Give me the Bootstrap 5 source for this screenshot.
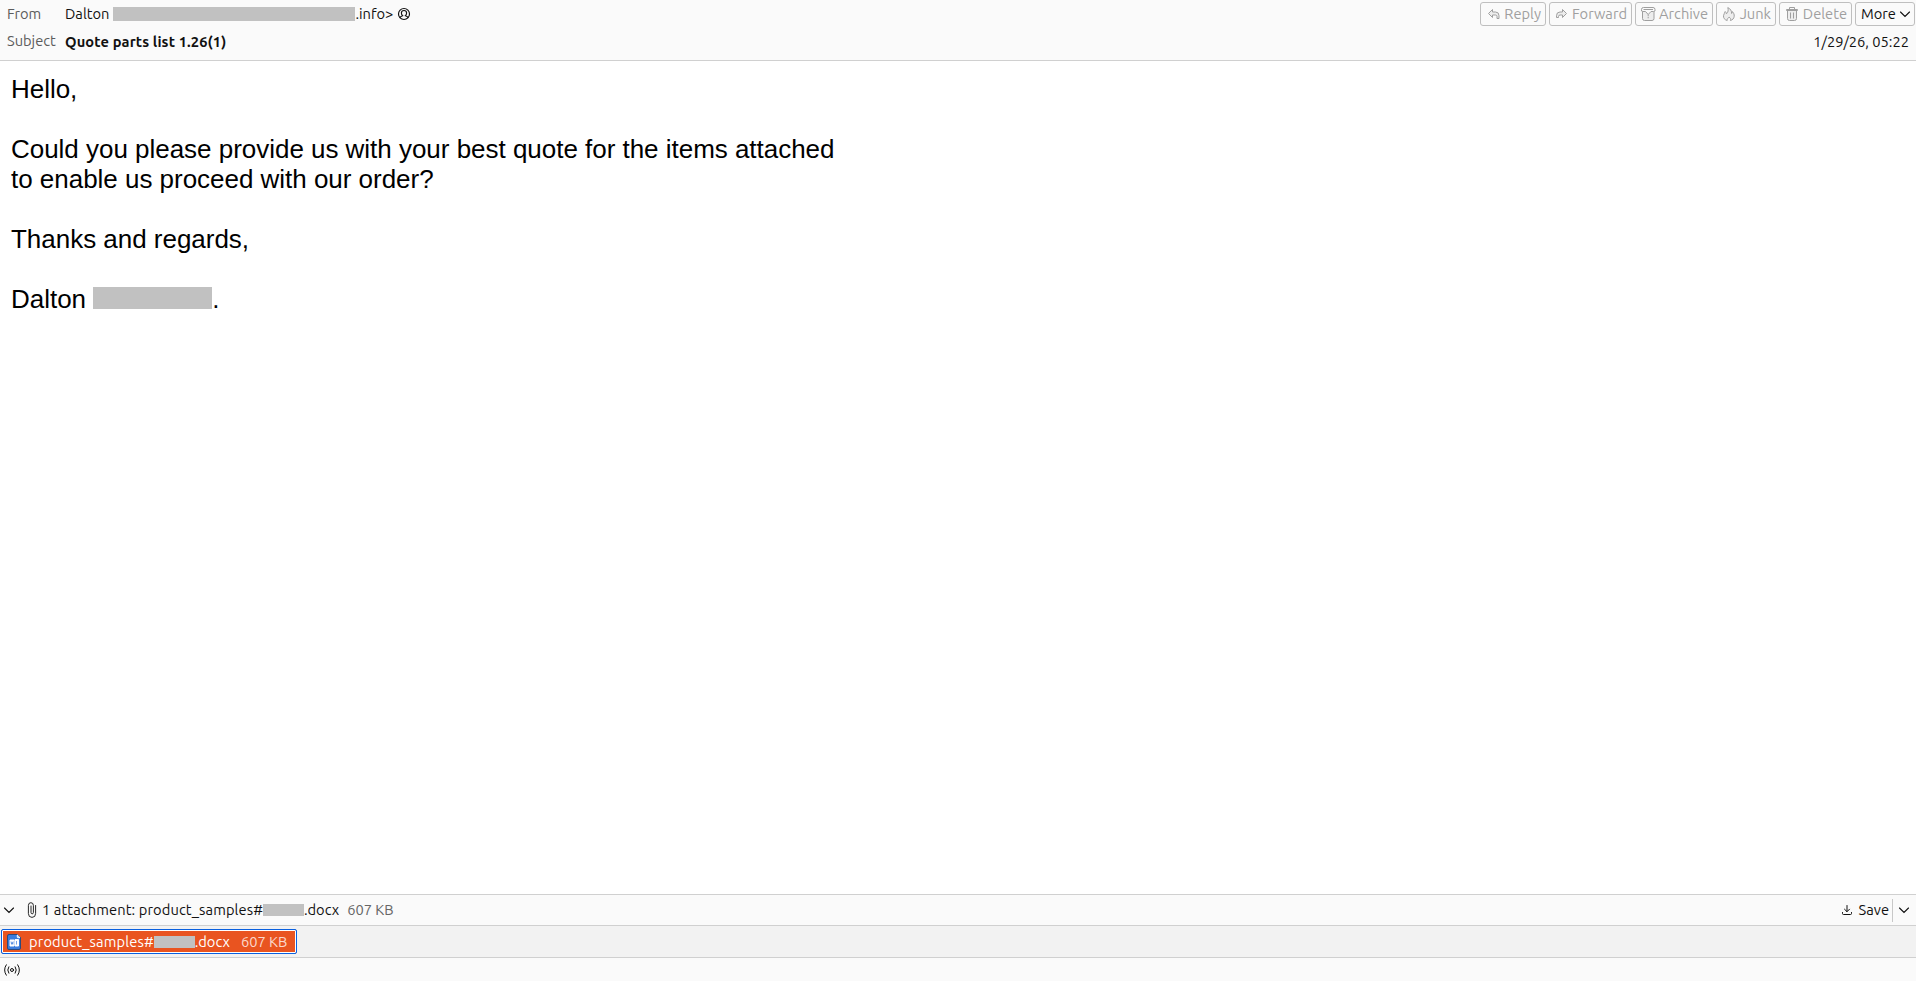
<!DOCTYPE html>
<html lang="en">
<head>
    <title>Quote parts list 1.26(1)</title>
    <meta charset="UTF-8">
    <meta name="viewport" content="width=device-width, initial-scale=1">

    <!-- Bootstrap 5 CSS -->
    <link href="https://cdn.jsdelivr.net/npm/bootstrap@5.3.0/dist/css/bootstrap.min.css" rel="stylesheet">

    <!-- Custom Styles -->
    <style>
        body {
            font-family: Ubuntu, "Noto Sans", sans-serif;
            font-size: 14.667px;
            line-height: 20px;
            color: #111111;
            background-color: #ffffff;
        }

        svg {
            flex: none;
            fill: none;
            stroke: currentColor;
        }

        .message-header {
            height: 61px;
            background-color: #fafafa;
            border-bottom: 1px solid #d0d0d0;
        }

        .header-fields {
            padding: 4px 0 0 7px;
        }

        .header-fields .field-name {
            width: 58px;
            color: #5c5c5c;
        }

        .header-subject {
            margin-top: 8px;
        }

        .header-subject .field-name {
            margin-top: -1px;
        }

        .header-subject strong {
            letter-spacing: 0.12px;
        }

        .redacted {
            display: inline-block;
            background-color: #c1c1c1;
            flex: none;
        }

        .redacted-address {
            width: 242px;
            height: 14px;
            margin: 0 0 0 4px;
        }

        .redacted-name {
            width: 119px;
            height: 22px;
            vertical-align: -1px;
        }

        .redacted-file {
            width: 41px;
            height: 12px;
        }

        .header-side {
            padding: 2px 1px 0 0;
        }

        .toolbar {
            gap: 3px;
        }

        .toolbar .btn {
            height: 24px;
            padding: 0 4px 0 6px;
            border: 1px solid #bfbfbf;
            border-radius: 3px;
            font-size: 14.667px;
            line-height: 18px;
            color: #9f9f9f;
            opacity: 1;
            display: flex;
            align-items: center;
            justify-content: space-between;
            white-space: nowrap;
        }

        .btn-reply { width: 66px; }
        .toolbar .btn-forward { width: 83px; padding-left: 5px; }
        .btn-archive { width: 78px; }
        .btn-junk { width: 60px; }
        .btn-delete { width: 73px; }

        .toolbar .btn-more {
            width: 60px;
            padding: 0 3px 0 5px;
            color: #111111;
        }

        .message-date {
            padding-right: 6px;
            margin-top: 6px;
        }

        .message-body {
            font-family: "Liberation Sans", Arial, sans-serif;
            font-size: 26px;
            line-height: 30px;
            letter-spacing: -0.025px;
            color: #000000;
            padding: 13px 11px;
        }

        .message-body p {
            margin-bottom: 30px;
        }

        .attachment-bar {
            height: 32px;
            padding-left: 3px;
            background-color: #fafafa;
            border-top: 1px solid #d0d0d0;
            border-bottom: 1px solid #d0d0d0;
        }

        .attachment-count {
            margin-left: 1px;
            letter-spacing: 0.11px;
        }

        .size-text {
            color: #666666;
        }

        .save-actions {
            padding-right: 6px;
        }

        .save-actions .save-label {
            margin-left: 6px;
        }

        .save-divider {
            width: 1px;
            height: 23px;
            background-color: #c8c8c8;
            margin: 0 5px 0 3px;
        }

        .attachment-list {
            height: 31px;
            padding: 3px 1px;
            background-color: #f2f2f2;
        }

        .attachment-item {
            width: 296px;
            height: 25px;
            padding-left: 4px;
            border: 1px solid #0a60df;
            border-radius: 2px;
            box-shadow: inset 0 0 0 1px #ffffff;
            background-color: #e95420;
            color: #ffffff;
        }

        .attachment-item .file-name {
            margin-left: 7px;
            letter-spacing: 0.14px;
        }

        .attachment-item .size-text {
            margin-left: 11px;
            color: #fbd8cc;
        }

        .status-bar {
            height: 24px;
            padding-left: 4px;
            background-color: #fafafa;
            border-top: 1px solid #d0d0d0;
        }
    </style>
</head>
<body class="d-flex flex-column vh-100 overflow-hidden">

<!-- Message header -->
<header class="message-header d-flex justify-content-between flex-shrink-0">
    <div class="header-fields">
        <div class="d-flex align-items-center">
            <span class="field-name">From</span>
            <span>Dalton</span>
            <span class="redacted redacted-address"></span>
            <span>.info&gt;</span>
            <svg class="ms-1" width="14" height="14" viewBox="0 0 14 14" stroke-width="1.15">
                <circle cx="7" cy="7" r="5.5"/>
                <path d="M2.8 10.7C3.3 9.5 4.2 9.1 5.6 8.7C4.7 7.9 4.4 7 4.4 5.9C4.4 4.4 5.4 3.5 7 3.5S9.6 4.4 9.6 5.9C9.6 7 9.3 7.9 8.4 8.7C9.8 9.1 10.7 9.5 11.2 10.7"/>
            </svg>
        </div>
        <div class="header-subject d-flex">
            <span class="field-name">Subject</span>
            <strong>Quote parts list 1.26(1)</strong>
        </div>
    </div>

    <div class="header-side">
        <div class="toolbar d-flex">
            <button type="button" class="btn btn-reply" disabled>
                <svg width="14" height="14" viewBox="0 0 14 14" stroke-linejoin="round">
                    <path d="M5.5 2.5L1.5 6.5L5.5 10.5V8H8.5Q10 8 10 9.5V11.5H12V8.7Q12 5 8.5 5H5.5Z" fill="#ededed"/>
                </svg>
                <span>Reply</span>
            </button>
            <button type="button" class="btn btn-forward" disabled>
                <svg width="14" height="14" viewBox="0 0 14 14" stroke-linejoin="round">
                    <path d="M7.5 2.5L11.5 6.5L7.5 10.5V8H5Q3.5 8 3.5 9.5V10.5H1.5V8.7Q1.5 5 5 5H7.5Z" fill="#ededed"/>
                </svg>
                <span>Forward</span>
            </button>
            <button type="button" class="btn btn-archive ps-1" disabled>
                <svg width="16" height="16" viewBox="0 0 16 16">
                    <path d="M2.5 5.5V12.5Q2.5 14.5 4.5 14.5H12Q14 14.5 14 12.5V5.5" fill="#ededed"/>
                    <path d="M1.5 5V3.5Q1.5 1.5 3.5 1.5H13Q15 1.5 15 3.5V5L13.5 5.5H11L8.2 8.5L5.5 5.5H3Z" fill="#fafafa"/>
                    <path d="M3.5 3.5H13"/>
                    <path d="M8.2 8.5V13" stroke-dasharray="1.5 .7"/>
                </svg>
                <span>Archive</span>
            </button>
            <button type="button" class="btn btn-junk ps-1" disabled>
                <svg width="16" height="16" viewBox="0 0 16 16" stroke-linejoin="round">
                    <path d="M6.2 14.5C3.5 13.8 2.3 12 2.5 9.7C2.7 8 3.8 7.2 4.2 5.5C5 6 5.4 6.8 5.4 7.8C7.3 6.3 7.5 4 6.8 1.6C9.6 2.8 10.7 5 10.6 7.5C11.2 7.2 11.4 6.4 11.3 5.5C12.8 7 13.4 8.5 13.2 10.3C13 12.5 11.5 14 9.4 14.5C10 13 9.5 12 8 11C7.4 12 5.9 12.8 6.2 14.5Z" fill="#ededed"/>
                </svg>
                <span>Junk</span>
            </button>
            <button type="button" class="btn btn-delete ps-1" disabled>
                <svg width="16" height="16" viewBox="0 0 16 16">
                    <path d="M3.5 5V12.5Q3.5 14.5 5.5 14.5H10.5Q12.5 14.5 12.5 12.5V5" fill="#ededed"/>
                    <path d="M2.5 4.5V3.5H13.5V4.5ZM5.5 3V1.5H10.5V3M6.5 6.5V12.5M9.5 6.5V12.5"/>
                </svg>
                <span>Delete</span>
            </button>
            <button type="button" class="btn btn-more">
                <span>More</span>
                <svg width="12" height="12" viewBox="0 0 12 12" stroke-width="1.1" stroke-linecap="round">
                    <path d="M1.5 4L6 8.5L10.5 4"/>
                </svg>
            </button>
        </div>
        <div class="message-date text-end">1/29/26, 05:22</div>
    </div>
</header>

<!-- Message text -->
<main class="message-body flex-grow-1">
    <p>Hello,</p>
    <p>Could you please provide us with your best quote for the items attached<br>to enable us proceed with our order?</p>
    <p>Thanks and regards,</p>
    <p>Dalton <span class="redacted redacted-name"></span>.</p>
</main>

<!-- Attachments -->
<section class="flex-shrink-0">
    <div class="attachment-bar d-flex align-items-center">
        <svg width="12" height="12" viewBox="0 0 12 12" stroke-width="1.1" stroke-linecap="round">
            <path d="M1.5 4L6 8.5L10.5 4"/>
        </svg>
        <svg class="ms-2" width="18" height="18" viewBox="0 0 18 18" stroke-width=".9" stroke-linecap="round">
            <path d="M8 5V11.5Q8 12.8 9.2 12.8T10.4 11.5V4.5Q10.4 1.7 7.9 1.7T5.4 4.5V12.5Q5.4 16.4 9 16.4T12.6 12.5V4.5"/>
        </svg>
        <span class="attachment-count">1 attachment: product_samples#</span>
        <span class="redacted redacted-file"></span>
        <span>.docx</span>
        <span class="size-text ms-2">607 KB</span>
        <div class="save-actions d-flex align-items-center ms-auto">
            <svg width="12" height="12" viewBox="0 0 12 12" stroke-linecap="round" stroke-linejoin="round">
                <path d="M6 1.5V7.5M3.5 5.2L6 7.7L8.5 5.2M1.5 8.5V9.5Q1.5 10.5 2.5 10.5H9.5Q10.5 10.5 10.5 9.5V8.5"/>
            </svg>
            <span class="save-label">Save</span>
            <span class="save-divider"></span>
            <svg width="12" height="12" viewBox="0 0 12 12" stroke-width="1.1" stroke-linecap="round">
                <path d="M1.5 4L6 8.5L10.5 4"/>
            </svg>
        </div>
    </div>
    <div class="attachment-list">
        <div class="attachment-item d-flex align-items-center">
            <svg width="16" height="16" viewBox="0 0 16 16" stroke="none">
                <path d="M3 .5H11.5L14.5 3.5V14Q14.5 15.5 13 15.5H3Q1.5 15.5 1.5 14V2Q1.5 .5 3 .5Z" fill="#3b7ddd" stroke="#2b4a7d"/>
                <path d="M11.3 1L14 3.7H12Q11.3 3.7 11.3 3Z" fill="#6aa2ee"/>
                <path d="M4 6H8V12H4ZM9 5.5H12.5V12H9Z" fill="#ffffff"/>
                <path d="M5 7.5L5.6 10.3L6.2 8.3L6.8 10.3L7.2 7.5M10.5 7V10.5" fill="none" stroke="#3b7ddd" stroke-width=".7"/>
            </svg>
            <span class="file-name">product_samples#</span>
            <span class="redacted redacted-file"></span>
            <span>.docx</span>
            <span class="size-text">607 KB</span>
        </div>
    </div>
</section>

<!-- Status bar -->
<footer class="status-bar d-flex align-items-center flex-shrink-0">
    <svg width="16" height="12" viewBox="0 0 16 12" stroke="#404040" stroke-linecap="round">
        <circle cx="8" cy="6" r="1.5"/>
        <path d="M4.8 2.8Q2.6 6 4.8 9.2M2.3 .8Q-1.2 6 2.3 11.2M11.2 2.8Q13.4 6 11.2 9.2M13.7 .8Q17.2 6 13.7 11.2"/>
    </svg>
</footer>

<script src="https://cdn.jsdelivr.net/npm/bootstrap@5.3.0/dist/js/bootstrap.bundle.min.js"></script>
</body>
</html>
